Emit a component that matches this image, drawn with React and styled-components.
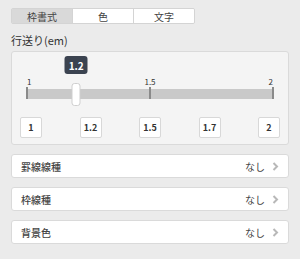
import React from 'react';
import styled, { createGlobalStyle } from 'styled-components';

const GlobalStyle = createGlobalStyle`
  html, body {
    margin: 0;
    padding: 0;
    background: #ebebeb;
    font-family: "Noto Sans CJK JP", "Noto Sans", "Liberation Sans", sans-serif;
    color: #333;
  }
`;

const MIN = 1;
const MAX = 2;
const value = 1.2;
const presets = ['1', '1.2', '1.5', '1.7', '2'];
const marks = [
  { v: 1, align: 'left' },
  { v: 1.5, align: 'center' },
  { v: 2, align: 'right' },
];
const rows = ['罫線線種', '枠線種', '背景色'];

const pct = (v) => ((v - MIN) / (MAX - MIN)) * 100;

const App = () => {
  return (
    <>
      <GlobalStyle />
      <Page>
        <Tabs>
          <Tab $active>枠書式</Tab>
          <Tab>色</Tab>
          <Tab>文字</Tab>
        </Tabs>
        <Label>行送り(em)</Label>
        <Panel>
          <Slider>
            <Track>
              <Bubble style={{ left: `${pct(value)}%` }}>{value}</Bubble>
              {marks.map((m) => (
                <React.Fragment key={m.v}>
                  <Tick style={{ left: `${pct(m.v)}%` }} />
                  <MarkLabel $align={m.align} style={{ left: `${pct(m.v)}%` }}>
                    {m.v}
                  </MarkLabel>
                </React.Fragment>
              ))}
              <Handle style={{ left: `${pct(value)}%` }} />
            </Track>
          </Slider>
          <Presets>
            {presets.map((p) => (
              <Preset key={p}>{p}</Preset>
            ))}
          </Presets>
        </Panel>
        <List>
          {rows.map((r) => (
            <Row key={r}>
              <RowLabel>{r}</RowLabel>
              <RowValue>
                なし
                <svg width="7" height="9" viewBox="0 0 7 9">
                  <polyline points="1.5,1 5,4.5 1.5,8" fill="none" stroke="#b8b8b8" strokeWidth="2" />
                </svg>
              </RowValue>
            </Row>
          ))}
        </List>
      </Page>
    </>
  );
};

const Page = styled.div`
  padding: 8px 11px 0 11px;
  border-top: 2px solid #f3f3f3;
  margin-top: -2px;
`;

const Tabs = styled.div`
  display: flex;
  width: 184px;
  height: 16px;
  border: 1px solid #d4d4d4;
  border-radius: 2px;
  overflow: hidden;
  box-sizing: border-box;
`;

const Tab = styled.div`
  width: 62px;
  display: flex;
  align-items: center;
  justify-content: center;
  font-size: 10px;
  color: #444;
  background: ${(p) => (p.$active ? '#d9d9d9' : '#fff')};
  & + & {
    border-left: 1px solid #d4d4d4;
  }
`;

const Label = styled.div`
  margin-top: 9px;
  font-size: 11px;
  line-height: 15px;
  color: #333;
`;

const Panel = styled.div`
  margin-top: 3px;
  background: #f4f4f4;
  border: 1px solid #dadada;
  border-radius: 3px;
  padding: 0 8px 6px;
`;

const Slider = styled.div`
  height: 56px;
  padding: 0 7px;
`;

const Track = styled.div`
  position: relative;
  top: 37px;
  height: 10px;
  background: #c9c9c9;
`;

const Bubble = styled.div`
  position: absolute;
  top: -33px;
  transform: translateX(-50%);
  width: 23px;
  height: 18px;
  border-radius: 3px;
  background: #3b4350;
  color: #fff;
  font-size: 10px;
  font-weight: bold;
  display: flex;
  align-items: center;
  justify-content: center;
`;

const Tick = styled.div`
  position: absolute;
  top: -2px;
  bottom: 0;
  width: 2px;
  margin-left: -1px;
  background: #8a8a8a;
`;

const MarkLabel = styled.div`
  position: absolute;
  top: -11px;
  font-size: 8px;
  line-height: 8px;
  color: #333;
  transform: ${(p) =>
    p.$align === 'left' ? 'none' : p.$align === 'right' ? 'translateX(-100%)' : 'translateX(-50%)'};
`;

const Handle = styled.div`
  position: absolute;
  top: -6px;
  width: 9px;
  height: 23px;
  box-sizing: border-box;
  transform: translateX(-50%);
  background: #fff;
  border: 1px solid #cfcfcf;
  border-radius: 3px;
`;

const Presets = styled.div`
  display: flex;
  justify-content: space-between;
  margin-top: 9px;
`;

const Preset = styled.div`
  width: 22px;
  height: 21px;
  box-sizing: border-box;
  background: #fff;
  border: 1px solid #d8d8d8;
  border-radius: 2px;
  font-size: 9px;
  font-weight: bold;
  color: #333;
  display: flex;
  align-items: center;
  justify-content: center;
`;

const List = styled.div`
  display: flex;
  flex-direction: column;
  gap: 9px;
  margin-top: 9px;
`;

const Row = styled.div`
  height: 24px;
  box-sizing: border-box;
  background: #fff;
  border: 1px solid #dadada;
  border-radius: 3px;
  display: flex;
  align-items: center;
  justify-content: space-between;
  padding: 0 9px 0 9px;
`;

const RowLabel = styled.div`
  font-size: 10px;
  font-weight: 500;
  color: #444;
`;

const RowValue = styled.div`
  display: flex;
  align-items: center;
  gap: 7px;
  font-size: 10px;
  color: #444;
`;

export default App;
